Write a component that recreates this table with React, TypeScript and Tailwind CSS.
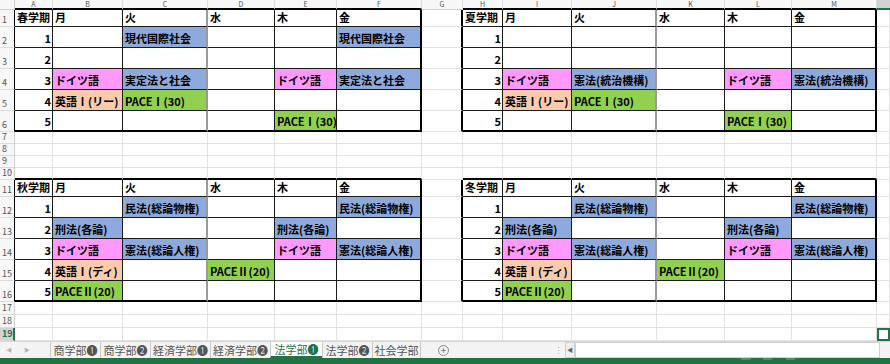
import React from "react";

type Fill = "blue" | "pink" | "orange" | "green";
type Cell = string | [string, Fill];

const fills: Record<Fill, string> = {
  blue: "bg-[#8ea9db]",
  pink: "bg-[#ff99ff]",
  orange: "bg-[#f8cbad]",
  green: "bg-[#92d050]",
};

const letters = ["", "A", "B", "C", "D", "E", "F", "G", "H", "I", "J", "K", "L", "M", ""];

const firstTerm = (label: string): Cell[][] => [
  [label, "月", "火", "水", "木", "金"],
  ["1", "", ["現代国際社会", "blue"], "", "", ["現代国際社会", "blue"]],
  ["2", "", "", "", "", ""],
  ["3", ["ドイツ語", "pink"], ["実定法と社会", "blue"], "", ["ドイツ語", "pink"], ["実定法と社会", "blue"]],
  ["4", ["英語Ⅰ(リー)", "orange"], ["PACEⅠ(30)", "green"], "", "", ""],
  ["5", "", "", "", ["PACEⅠ(30)", "green"], ""],
];

const summer: Cell[][] = [
  ["夏学期", "月", "火", "水", "木", "金"],
  ["1", "", "", "", "", ""],
  ["2", "", "", "", "", ""],
  ["3", ["ドイツ語", "pink"], ["憲法(統治機構)", "blue"], "", ["ドイツ語", "pink"], ["憲法(統治機構)", "blue"]],
  ["4", ["英語Ⅰ(リー)", "orange"], ["PACEⅠ(30)", "green"], "", "", ""],
  ["5", "", "", "", ["PACEⅠ(30)", "green"], ""],
];

const secondTerm = (label: string): Cell[][] => [
  [label, "月", "火", "水", "木", "金"],
  ["1", "", ["民法(総論物権)", "blue"], "", "", ["民法(総論物権)", "blue"]],
  ["2", ["刑法(各論)", "blue"], "", "", ["刑法(各論)", "blue"], ""],
  ["3", ["ドイツ語", "pink"], ["憲法(総論人権)", "blue"], "", ["ドイツ語", "pink"], ["憲法(総論人権)", "blue"]],
  ["4", ["英語Ⅰ(ディ)", "orange"], "", ["PACEⅡ(20)", "green"], "", ""],
  ["5", ["PACEⅡ(20)", "green"], "", "", "", ""],
];

const tables: { row: number; col: number; data: Cell[][] }[] = [
  { row: 1, col: 1, data: firstTerm("春学期") },
  { row: 1, col: 8, data: summer },
  { row: 11, col: 1, data: secondTerm("秋学期") },
  { row: 11, col: 8, data: secondTerm("冬学期") },
];

const tableRow = (r: number) => (r >= 1 && r <= 6) || (r >= 11 && r <= 16);
const tableCol = (c: number) => (c >= 1 && c <= 6) || (c >= 8 && c <= 13);
const inTable = (r: number, c: number) => tableRow(r) && tableCol(c);

function lookup(r: number, c: number): Cell {
  for (const t of tables) {
    const y = r - t.row;
    const x = c - t.col;
    if (y >= 0 && y < 6 && x >= 0 && x < 6) return t.data[y][x];
  }
  return "";
}

function rightBorder(r: number, c: number) {
  if (inTable(r, c)) {
    if (c === 6 || c === 13) return "border-r-2 border-r-black";
    if (c === 3 || c === 10) return "border-r-2 border-r-[#9a9a9a]";
    return "border-r border-r-[#1a1a1a]";
  }
  if (c === 7 && tableRow(r)) return "border-r-2 border-r-black";
  return "border-r border-r-[#e2e2e2]";
}

function bottomBorder(r: number, c: number) {
  if (inTable(r, c)) {
    if (r === 6 || r === 16) return "border-b-2 border-b-black";
    return "border-b border-b-[#1a1a1a]";
  }
  if (r === 10 && tableCol(c)) return "border-b-2 border-b-black";
  return "border-b border-b-[#e2e2e2]";
}

function BodyCell({ r, c }: { r: number; c: number }) {
  if (r === 19 && c === 14) {
    return <div className="border-2 border-[#217346]" />;
  }
  const cell = lookup(r, c);
  const text = typeof cell === "string" ? cell : cell[0];
  const bg = typeof cell === "string" ? "bg-white" : fills[cell[1]];
  const isNum = (c === 1 || c === 8) && /^\d$/.test(text);
  return (
    <div
      className={[
        "flex items-end overflow-hidden whitespace-nowrap pb-[3px] text-[11px] font-bold leading-none text-black",
        isNum ? "justify-end pr-[1px]" : "pl-[2px]",
        bg,
        rightBorder(r, c),
        bottomBorder(r, c),
      ].join(" ")}
    >
      {text}
    </div>
  );
}

function ColHeader({ c }: { c: number }) {
  if (c === 14) {
    return <div className="border-b-2 border-b-[#217346] bg-[#d2d2d2]" />;
  }
  return (
    <div
      className={[
        "flex items-center justify-center bg-[#f7f7f7] text-[7px] leading-[7px] text-[#555]",
        c === 0 ? "border-r border-r-[#d0d0d0]" : "border-r border-r-[#dcdcdc]",
        tableCol(c) ? "border-b-2 border-b-black" : "border-b border-b-[#cfcfcf]",
      ].join(" ")}
    >
      {letters[c]}
    </div>
  );
}

function RowHeader({ r }: { r: number }) {
  const active = r === 19;
  return (
    <div
      className={[
        "flex items-end pb-[2px] pl-[2px] text-[9px] leading-none",
        active
          ? "bg-[#d2d2d2] font-bold text-[#217346] border-r-2 border-r-[#217346]"
          : "bg-[#f7f7f7] text-[#555]",
        !active && tableRow(r) ? "border-r border-r-black" : "",
        !active && !tableRow(r) ? "border-r border-r-[#cfcfcf]" : "",
        "border-b border-b-[#dcdcdc]",
      ].join(" ")}
    >
      {r}
    </div>
  );
}

const sheets = [
  { name: "商学部❶", w: "w-[50px]" },
  { name: "商学部❷", w: "w-[50px]" },
  { name: "経済学部❶", w: "w-[60px]" },
  { name: "経済学部❷", w: "w-[60px]" },
  { name: "法学部❶", w: "w-[52px]", active: true },
  { name: "法学部❷", w: "w-[50px]" },
  { name: "社会学部", w: "w-[48px]" },
];

function SheetTabs() {
  return (
    <div className="flex h-[17px] items-stretch border-t border-t-[#d6d6d6] bg-[#f3f3f3] text-[11px] leading-none text-[#555]">
      <div className="flex w-[50px] items-center gap-[12px] pl-[6px] text-[6px] text-[#b8b8b8]">
        <span>◀</span>
        <span>▶</span>
      </div>
      {sheets.map((s) => (
        <div
          key={s.name}
          className={[
            "flex items-center justify-center border-l border-l-[#c8c8c8]",
            s.w,
            s.active ? "border-b-2 border-b-[#217346] bg-white text-[#217346]" : "",
          ].join(" ")}
        >
          {s.name}
        </div>
      ))}
      <div className="flex w-[46px] items-center justify-center border-l border-l-[#c8c8c8]">
        <span className="flex h-[11px] w-[11px] items-center justify-center rounded-full border border-[#888] text-[10px] text-[#777]">
          +
        </span>
      </div>
      <div className="flex-1" />
      <div className="flex w-[10px] items-center justify-center text-[9px] text-[#aaa]">⋮</div>
      <div className="ml-[2px] flex w-[10px] items-center justify-center border border-[#d0d0d0] bg-[#f0f0f0] text-[6px] text-[#666]">
        ◀
      </div>
      <div className="w-[305px] border border-[#d0d0d0] bg-white" />
      <div className="w-[10px]" />
    </div>
  );
}

export default function App() {
  const rows = Array.from({ length: 20 }, (_, r) => r);
  const cols = Array.from({ length: 15 }, (_, c) => c);
  return (
    <div className="h-[364px] w-[890px] overflow-hidden bg-white font-['Noto_Sans_CJK_JP','Noto_Sans',sans-serif]">
      <div className="grid grid-cols-[15px_38px_70px_85px_67px_62px_85px_41px_40px_69px_85px_68px_67px_85px_13px] grid-rows-[10px_17px_21px_21px_21px_21px_21px_12px_12px_12px_12px_17px_21px_21px_21px_21px_21px_13px_13px_13px]">
        {rows.map((r) =>
          cols.map((c) => {
            if (r === 0) return <ColHeader key={`${r}-${c}`} c={c} />;
            if (c === 0) return <RowHeader key={`${r}-${c}`} r={r} />;
            return <BodyCell key={`${r}-${c}`} r={r} c={c} />;
          })
        )}
      </div>
      <SheetTabs />
      <div className="flex h-[6px] bg-[#217346]">
        <div className="ml-[741px] h-[2px] w-[10px] bg-[#4f8f68]" />
        <div className="ml-[12px] h-[2px] w-[9px] bg-[#4f8f68]" />
        <div className="ml-[14px] h-[2px] w-[9px] bg-[#4f8f68]" />
      </div>
    </div>
  );
}
